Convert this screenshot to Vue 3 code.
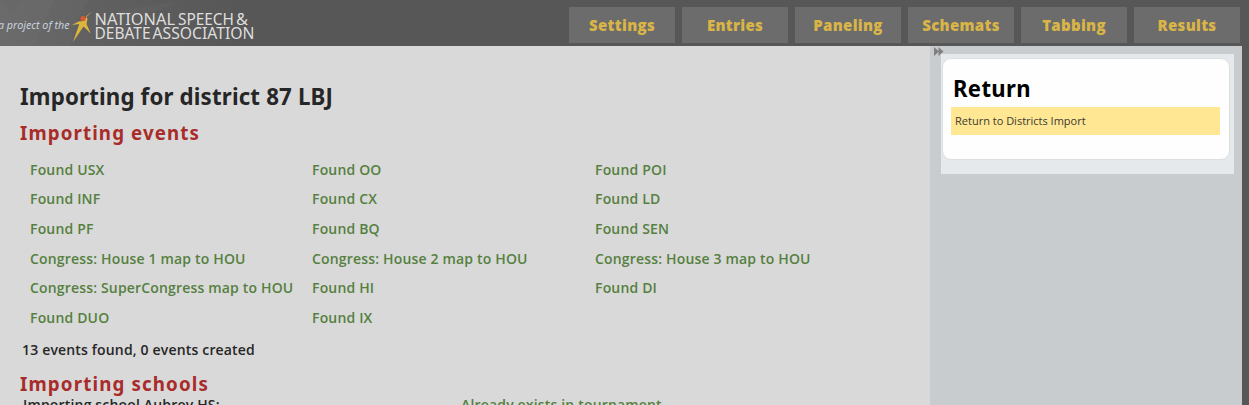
<script setup>
const tabs = ['Settings', 'Entries', 'Paneling', 'Schemats', 'Tabbing', 'Results']
const events = [
  'Found USX', 'Found OO', 'Found POI',
  'Found INF', 'Found CX', 'Found LD',
  'Found PF', 'Found BQ', 'Found SEN',
  'Congress: House 1 map to HOU', 'Congress: House 2 map to HOU', 'Congress: House 3 map to HOU',
  'Congress: SuperCongress map to HOU', 'Found HI', 'Found DI',
  'Found DUO', 'Found IX',
]
</script>

<template>
  <div class="page">
    <header class="header">
      <svg class="brand" width="270" height="46" viewBox="0 0 270 46">
        <defs>
          <linearGradient id="glow"><stop offset="0" stop-color="#fff" stop-opacity=".09" /><stop offset="1" stop-color="#fff" stop-opacity="0" /></linearGradient>
        </defs>
        <path d="M0 0H240V46H0Z" fill="url(#glow)" />
        <path d="M0 0H88Q74 20 70 46H0Z" fill="#fff" opacity=".025" />
        <path d="M0 0L10 13L24 0H54L34 46H0Z" fill="#fff" opacity=".02" />
        <path d="M112 14Q145 4 180 2Q160 12 112 20Z" fill="#fff" opacity=".025" />
        <text x="-2" y="29" class="project" textLength="71.5" lengthAdjust="spacingAndGlyphs">a project of the</text>
        <path d="M92.5 11L86 16.5L87.5 18.5L86.5 24L90.7 33.5L83.5 26.5L73 42L79.3 24L72 25L78.5 21.5L84 21L86 17.5Z" fill="#dcb53d" />
        <circle cx="83" cy="18.5" r="2.6" fill="#d95a32" />
        <text x="94.5" y="25" class="logo" textLength="80.5" lengthAdjust="spacingAndGlyphs">NATIONAL</text>
        <text x="178" y="25" class="logo" textLength="56" lengthAdjust="spacingAndGlyphs">SPEECH</text>
        <text x="236" y="25" class="logo" textLength="12" lengthAdjust="spacingAndGlyphs">&amp;</text>
        <text x="94.5" y="39" class="logo" textLength="56" lengthAdjust="spacingAndGlyphs">DEBATE</text>
        <text x="152.5" y="39" class="logo" textLength="102" lengthAdjust="spacingAndGlyphs">ASSOCIATION</text>
      </svg>
      <nav class="tabs">
        <a v-for="tab in tabs" :key="tab" class="tab">{{ tab }}</a>
      </nav>
    </header>
    <div class="body">
      <main class="content">
        <h2 class="title"><svg width="320" height="36"><text x="0" y="25" textLength="313" lengthAdjust="spacingAndGlyphs">Importing for district 87 LBJ</text></svg></h2>
        <h4 class="section"><svg width="200" height="30"><text x="0" y="22" textLength="180" lengthAdjust="spacingAndGlyphs">Importing events</text></svg></h4>
        <div class="events">
          <span v-for="event in events" :key="event">{{ event }}</span>
        </div>
        <p class="summary">13 events found, 0 events created</p>
        <h4 class="section schools"><svg width="200" height="30"><text x="0" y="22" textLength="189" lengthAdjust="spacingAndGlyphs">Importing schools</text></svg></h4>
        <div class="school"><span>Importing school Aubrey HS:</span><span class="exists">Already exists in tournament</span></div>
      </main>
      <aside class="sidebar">
        <svg class="collapse" width="10" height="9" viewBox="0 0 10 9"><path d="M0 0L5 4.5L0 9ZM4.5 0L9.5 4.5L4.5 9Z" fill="#807f82" /></svg>
        <div class="menu">
          <div class="card">
            <h3><svg width="90" height="36"><text x="0" y="26" textLength="78" lengthAdjust="spacingAndGlyphs">Return</text></svg></h3>
            <a class="link">Return to Districts Import</a>
          </div>
        </div>
      </aside>
    </div>
  </div>
</template>

<style>
body { margin: 0; overflow: hidden; }
</style>

<style scoped>
* { box-sizing: border-box; }
.page { width: 1249px; height: 405px; overflow: hidden; background: #575757; font: 600 14px/20px "Open Sans", sans-serif; letter-spacing: .17px; color: #262626; }
.header { height: 46px; display: flex; justify-content: space-between; background: #575757; }
.brand { display: block; letter-spacing: 0; }
.project { font: italic 400 11px "Open Sans", sans-serif; fill: #cdd7e1; }
.logo { font: 400 15.5px "Noto Sans", sans-serif; fill: #dedede; }
.tabs { display: flex; gap: 7px; padding: 7px 9px 0 0; }
.tab { width: 106px; height: 36px; background: #6c6c6c; color: #d9b548; font-size: 15px; font-weight: 800; line-height: 37px; text-align: center; letter-spacing: .3px; }
.body { display: flex; height: 359px; }
.content { width: 930px; height: 359px; padding: 34px 20px 0; overflow: hidden; background: #d9d9d9; }
h2, h3, h4, p { margin: 0; }
.title { height: 38px; font: 700 24px "Noto Sans", sans-serif; }
.title svg, .section svg, .card svg { display: block; fill: currentColor; overflow: visible; }
.section { height: 37px; color: #a82c2a; font: 700 20px "Noto Sans", sans-serif; letter-spacing: 1.2px; }
.events { display: grid; grid-template-columns: 282px 283px 283px; grid-auto-rows: 29.6px; padding-left: 10px; color: #55803f; line-height: 29.4px; white-space: nowrap; }
.events span:nth-child(n+4):nth-child(-n+6) { margin-top: -1px; }
.summary { padding: 7px 0 0 2px; height: 36px; }
.schools { height: 26px; }
.school { display: flex; padding-left: 3px; line-height: 20px; margin-top: 0; }
.school span:first-child { width: 438px; }
.exists { color: #55803f; }
.sidebar { position: relative; width: 312px; height: 359px; padding: 8px 8px 0 11px; background: #c8ccce; }
.collapse { position: absolute; left: 4px; top: 1px; }
.menu { height: 120px; padding: 4px 4px 14px 1px; background: #e5e9eb; }
.card { height: 102px; padding: 12px 9px 0 8px; border: 1px solid #dcdfe0; border-radius: 9px; background: #fefefe; }
.card h3 { height: 36px; padding-left: 2px; color: #000; font: 700 24px/36px "Noto Sans", sans-serif; letter-spacing: .4px; }
.link { display: block; height: 28px; padding-left: 4px; background: #ffe794; color: #3d3930; font-size: 11px; font-weight: 400; line-height: 28px; letter-spacing: 0; }
</style>
